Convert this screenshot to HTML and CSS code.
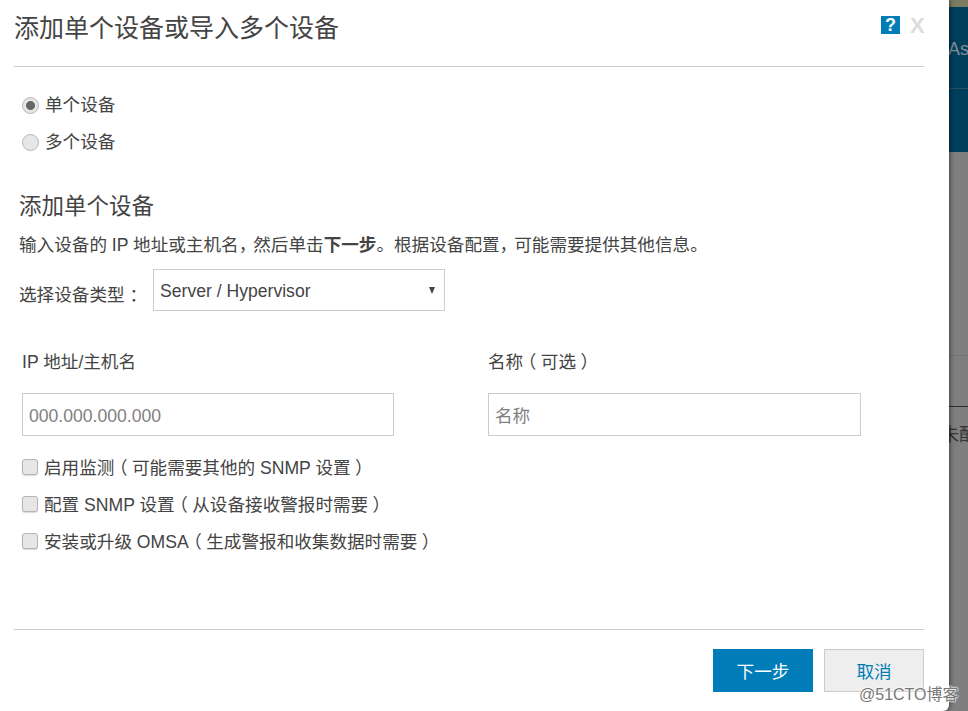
FILE: index.html
```html
<!DOCTYPE html>
<html lang="zh-CN">
<head>
  <meta charset="UTF-8">
  <meta name="viewport" content="width=device-width, initial-scale=1.0">
  <title>添加单个设备或导入多个设备</title>
  <link rel="stylesheet" href="styles.css">
</head>
<body>
  <div class="backdrop">
    <div class="band-olive"></div>
    <div class="band-teal"><span class="band-text">As</span></div>
    <div class="band-gray">
      <span class="band-text-dark">未配</span>
    </div>
  </div>

  <div class="modal">
    <div class="modal-header">
      <h1>添加单个设备或导入多个设备</h1>
      <div class="header-icons">
        <span class="help-icon">?</span>
        <span class="close-icon">X</span>
      </div>
    </div>

    <div class="modal-body">
      <label class="radio-row"><input type="radio" name="mode" checked> 单个设备</label>
      <label class="radio-row"><input type="radio" name="mode"> 多个设备</label>

      <h2>添加单个设备</h2>
      <p class="intro">输入设备的 IP 地址或主机名<span class="cm">，</span>然后单击<b>下一步</b>。根据设备配置<span class="cm">，</span>可能需要提供其他信息。</p>

      <div class="type-row">
        <label for="deviceType">选择设备类型<span class="colon">：</span></label>
        <div class="select-wrap">
          <select id="deviceType">
            <option>Server / Hypervisor</option>
          </select>
        </div>
      </div>

      <div class="field-grid">
        <div class="field">
          <label for="ip">IP 地址/主机名</label>
          <input type="text" id="ip" placeholder="000.000.000.000">
        </div>
        <div class="field">
          <label for="name">名称<span class="paren">（</span>可选<span class="paren">）</span></label>
          <input type="text" id="name" placeholder="名称">
        </div>
      </div>

      <label class="check-row"><input type="checkbox"> <span>启用监测<span class="paren">（</span>可能需要其他的 SNMP 设置<span class="paren">）</span></span></label>
      <label class="check-row"><input type="checkbox"> <span>配置 SNMP 设置<span class="paren">（</span>从设备接收警报时需要<span class="paren">）</span></span></label>
      <label class="check-row"><input type="checkbox"> <span>安装或升级 OMSA<span class="paren">（</span>生成警报和收集数据时需要<span class="paren">）</span></span></label>
    </div>

    <div class="modal-footer">
      <button class="btn btn-primary">下一步</button>
      <button class="btn btn-cancel">取消</button>
    </div>
  </div>

  <div class="watermark">@51CTO博客</div>
</body>
</html>
```

FILE: styles.css
```css
html, body {
  height: 100%;
}
body {
  margin: 0;
  overflow: hidden;
  position: relative;
  background-color: #7f7f7f;
  font-family: "Liberation Sans", "Noto Sans CJK SC", sans-serif;
  color: #444;
}
.backdrop {
  position: absolute;
  inset: 0;
  display: flex;
  flex-direction: column;
}
.band-olive {
  height: 7px;
  background-color: #7c7c62;
}
.band-teal {
  height: 145px;
  background: linear-gradient(#003f5c 81px, #2b4f63 81px, #2b4f63 82px, #003f5c 82px);
  position: relative;
}
.band-text {
  position: absolute;
  left: 948px;
  top: 32px;
  font-size: 18px;
  color: #80909a;
}
.band-gray {
  flex: 1;
  position: relative;
  background: linear-gradient(#7f7f7f 203px, #737373 203px, #737373 204px, #7f7f7f 204px, #7f7f7f 254px, #2e2e2e 254px, #2e2e2e 255px, #7f7f7f 255px);
}
.band-text-dark {
  position: absolute;
  left: 941px;
  top: 268px;
  font-size: 18px;
  color: #333;
  white-space: nowrap;
}

.modal {
  position: absolute;
  left: 0;
  top: 0;
  width: 949px;
  height: 711px;
  box-sizing: border-box;
  padding: 0 25px 0 14px;
  background: #fff;
  border-radius: 0 0 6px 0;
  box-shadow: 1px 0 5px rgba(0, 0, 0, 0.5);
  display: flex;
  flex-direction: column;
}
.modal-header {
  height: 66px;
  border-bottom: 1px solid #ccc;
  display: flex;
  justify-content: space-between;
}
h1 {
  margin: 10px 0 0;
  font-size: 25px;
  line-height: 36px;
  font-weight: normal;
}
.header-icons {
  display: flex;
  align-items: flex-start;
  padding-top: 16px;
  gap: 10px;
}
.help-icon {
  width: 19px;
  height: 18px;
  background: #007db8;
  color: #fff;
  font-size: 18px;
  font-weight: bold;
  line-height: 18px;
  text-align: center;
}
.close-icon {
  width: 14px;
  font-size: 22px;
  font-weight: bold;
  line-height: 20px;
  color: #dcdcdc;
}

.modal-body {
  flex: 1;
  font-size: 17.6px;
}
.radio-row {
  display: flex;
  align-items: center;
  gap: 6px;
  height: 37px;
  box-sizing: border-box;
  padding: 0 0 4px 8px;
}
.radio-row:first-child {
  margin-top: 20px;
}
.radio-row input {
  appearance: none;
  width: 17px;
  height: 17px;
  margin: 4px 0 0;
  border: 1px solid #b5b5b5;
  border-radius: 50%;
  background: #e6e6e6;
}
.radio-row input:checked {
  background: radial-gradient(circle, #666 0 4px, #e6e6e6 5px);
}
h2 {
  margin: 30px 0 0 5px;
  font-size: 22.5px;
  line-height: 32px;
  font-weight: normal;
}
.intro {
  margin: 9px 0 0 5px;
  line-height: 26px;
  white-space: nowrap;
}
.cm {
  letter-spacing: -3px;
}
.type-row {
  display: flex;
  align-items: center;
  margin: 11px 0 0 5px;
}
.type-row label {
  width: 134px;
  padding-top: 6px;
  white-space: nowrap;
}
.colon {
  margin-left: 5px;
}
.select-wrap {
  position: relative;
}
.select-wrap::after {
  content: "";
  position: absolute;
  right: 10px;
  top: 18px;
  border-left: 3.5px solid transparent;
  border-right: 3.5px solid transparent;
  border-top: 7px solid #444;
}
select {
  appearance: none;
  display: block;
  width: 292px;
  height: 42px;
  padding: 2px 6px 0;
  border: 1px solid #ccc;
  border-radius: 0;
  background: #fff;
  color: #444;
  font: inherit;
}
.field-grid {
  display: grid;
  grid-template-columns: 372px 373px;
  column-gap: 94px;
  margin: 38px 0 0 8px;
}
.field label {
  display: block;
  line-height: 26px;
  margin-bottom: 18px;
}
.field input {
  display: block;
  width: 100%;
  height: 43px;
  box-sizing: border-box;
  padding: 3px 6px 0;
  border: 1px solid #ccc;
  font: inherit;
  color: #444;
}
.field input::placeholder {
  color: #808080;
}
.paren {
  font-feature-settings: "halt";
  margin: 0 4.4px;
}
.check-row {
  display: flex;
  align-items: center;
  gap: 6px;
  height: 37px;
  padding-left: 8px;
  white-space: nowrap;
}
.field-grid + .check-row {
  margin-top: 12px;
}
.check-row input {
  appearance: none;
  width: 16px;
  height: 16px;
  margin: 0;
  border: 1px solid #b5b5b5;
  border-radius: 3px;
  background: #e6e6e6;
  box-shadow: 0 1px 1px rgba(0, 0, 0, 0.15);
}

.modal-footer {
  height: 82px;
  box-sizing: border-box;
  border-top: 1px solid #ccc;
  display: flex;
  justify-content: flex-end;
  align-items: flex-start;
  gap: 11px;
  padding-top: 19px;
}
.btn {
  width: 100px;
  height: 43px;
  box-sizing: border-box;
  font: inherit;
  font-size: 17.6px;
  cursor: pointer;
}
.btn-primary {
  background: #007db8;
  border: none;
  color: #fff;
}
.btn-cancel {
  background: #eee;
  border: 1px solid #ccc;
  color: #007db8;
}

.watermark {
  position: absolute;
  left: 859px;
  top: 681px;
  font-size: 16px;
  color: #777;
  text-shadow: 0 0 2px #fff, 0 0 2px #fff, 0 0 2px #fff;
}
```
